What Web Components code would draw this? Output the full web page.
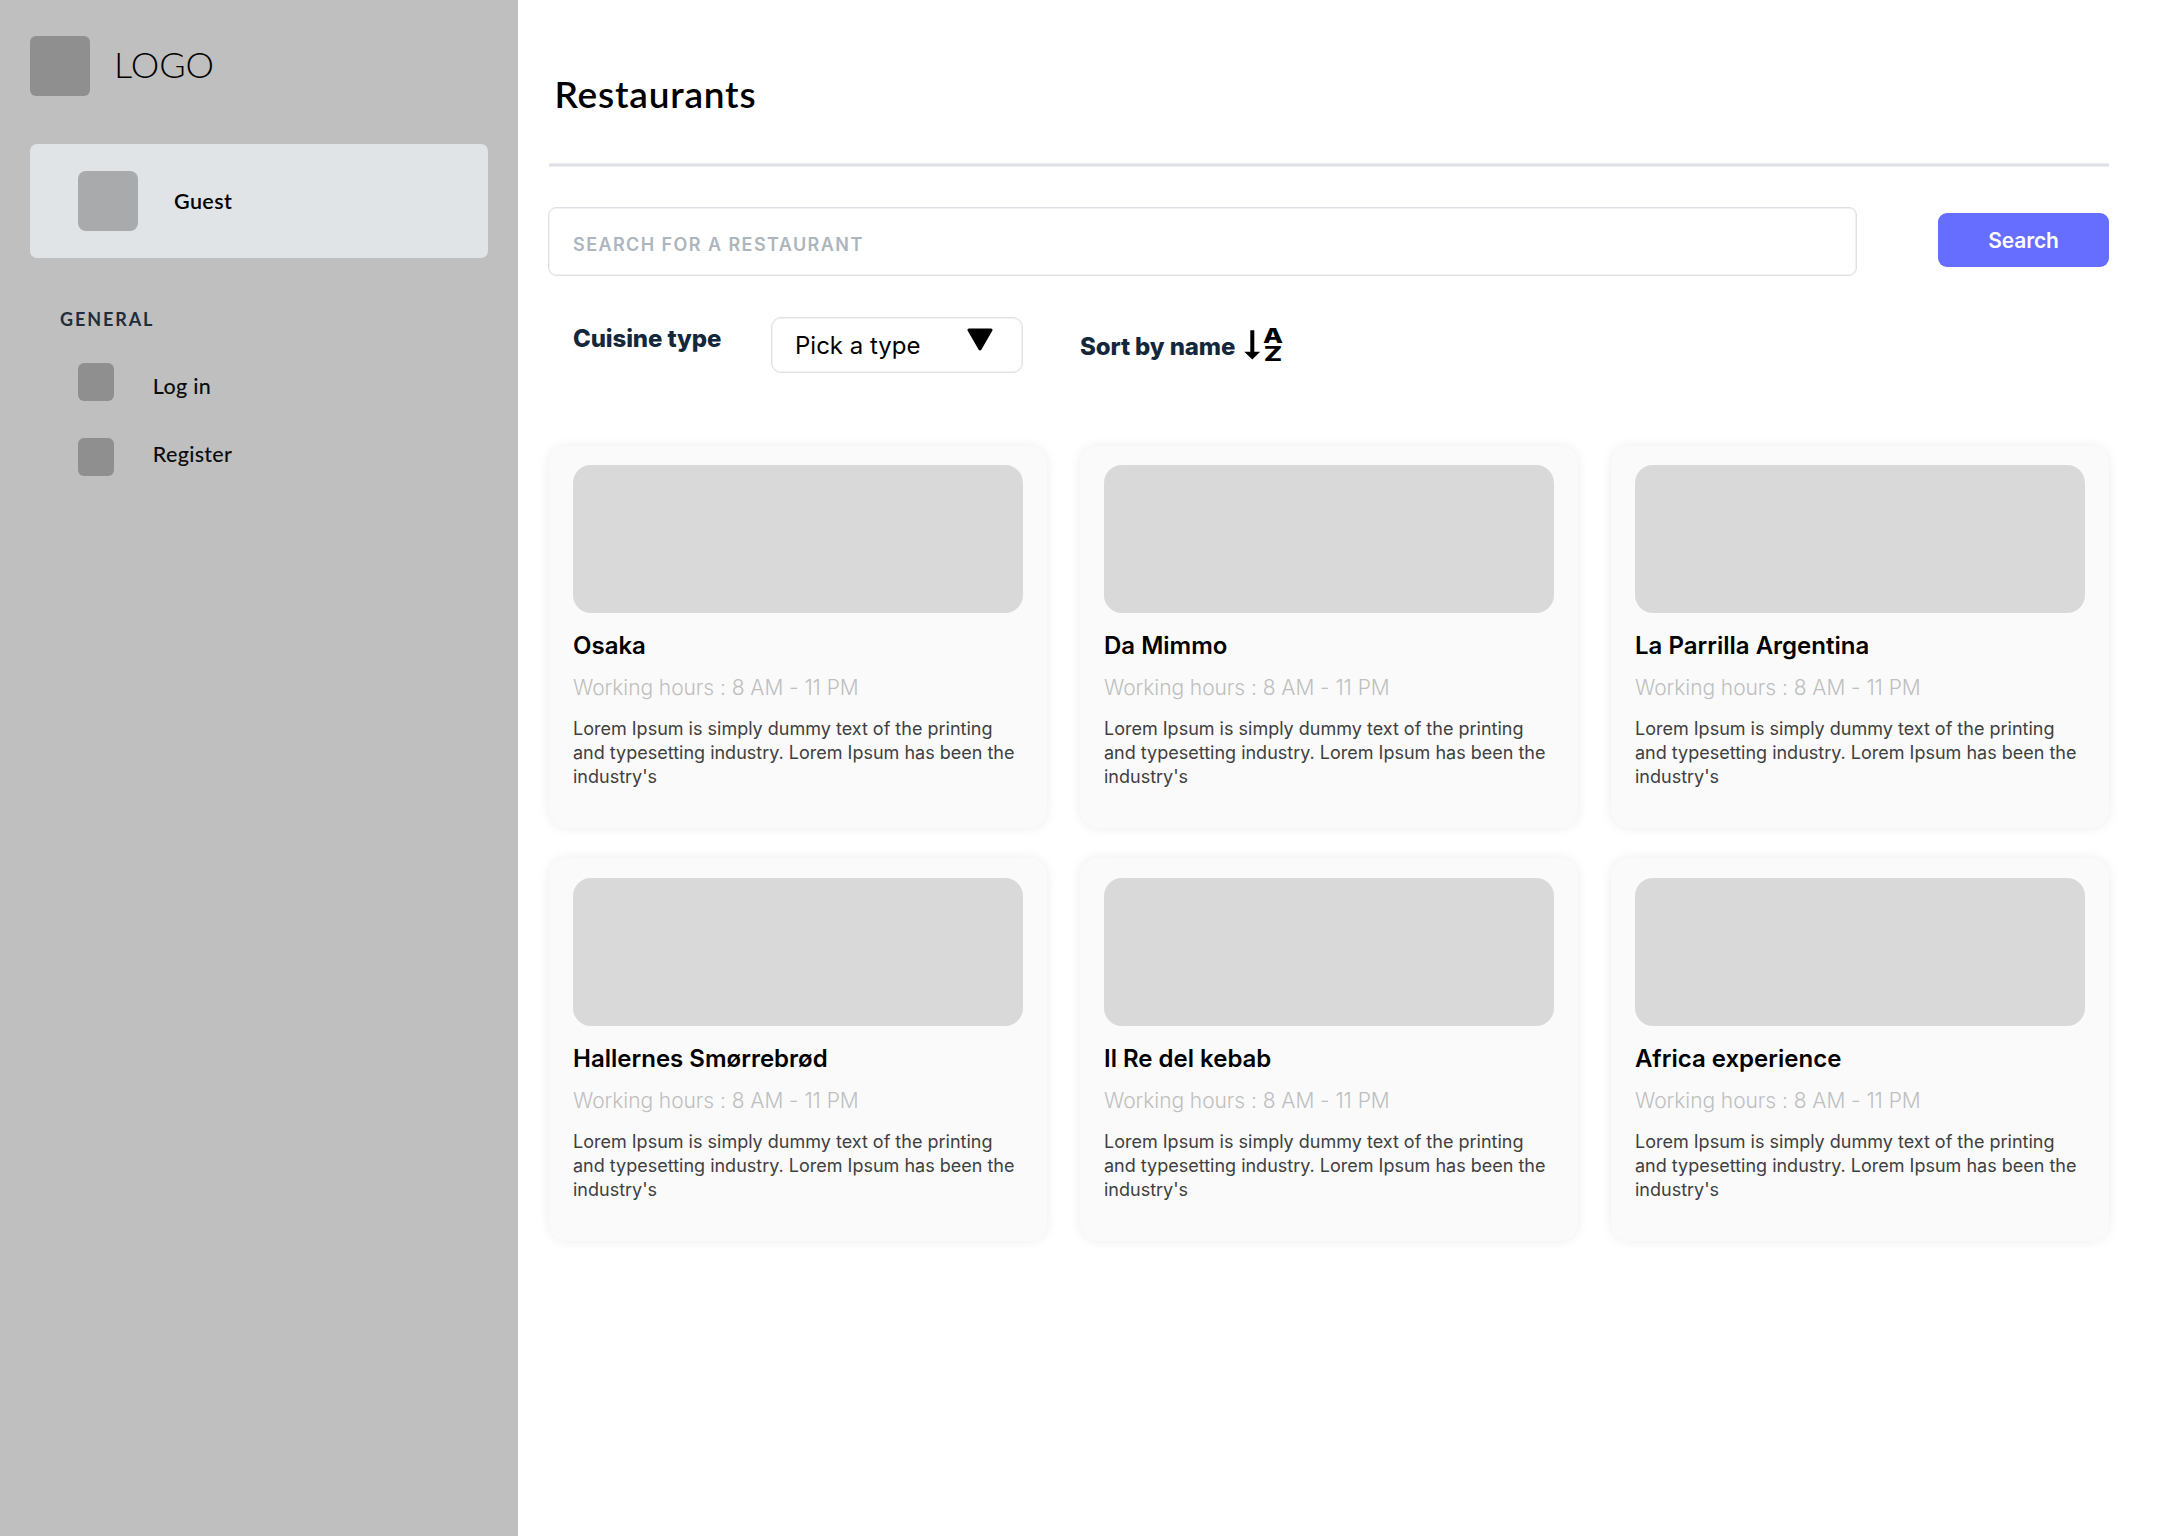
<!DOCTYPE html>
<html lang="en">
<head>
<meta charset="utf-8">
<title>Restaurants</title>
<style>
html,body{margin:0;height:100%;background:#fff}
body{font-family:Inter,"Liberation Sans",sans-serif;color:#000;overflow:hidden}
</style>
</head>
<body>
<app-shell>
  <side-bar slot="side">
    <user-card slot="user">Guest</user-card>
    <nav-item style="--shift:6.6px">Log in</nav-item>
    <nav-item style="--shift:-5.6px">Register</nav-item>
  </side-bar>
  <page-header>Restaurants</page-header>
  <search-bar></search-bar>
  <filter-bar></filter-bar>
  <card-grid>
    <restaurant-card name="Osaka"></restaurant-card>
    <restaurant-card name="Da Mimmo"></restaurant-card>
    <restaurant-card name="La Parrilla Argentina"></restaurant-card>
    <restaurant-card name="Hallernes Smørrebrød"></restaurant-card>
    <restaurant-card name="Il Re del kebab"></restaurant-card>
    <restaurant-card name="Africa experience"></restaurant-card>
  </card-grid>
</app-shell>
<script>
const define = (tag, html) => customElements.define(tag, class extends HTMLElement {
  constructor() {
    super();
    this.attachShadow({ mode: 'open' }).innerHTML = html;
  }
  connectedCallback() {
    const name = this.shadowRoot.querySelector('[data-name]');
    if (name) name.textContent = this.getAttribute('name');
  }
});

define('app-shell', `
<style>
:host{display:flex;height:1536px;width:2160px}
main{flex:1;min-width:0;box-sizing:border-box;padding:71.5px 51px 0 31.5px;display:flex;flex-direction:column}
</style>
<slot name="side"></slot><main><slot></slot></main>`);

define('side-bar', `
<style>
:host{display:flex;flex-direction:column;box-sizing:border-box;width:517.5px;padding:36px 29.5px 0 30px;background:#bfbfbf}
.brand{display:flex;align-items:center;height:60px;gap:24px}
.mark{width:60px;height:60px;border-radius:6px;background:#8f8f8f}
.name{font:300 36px/44px Lato,sans-serif;margin-top:-4px}
.user{margin-top:48px}
h2{margin:48.8px 0 0 30px;font:700 18px/24px Lato,sans-serif;letter-spacing:1.9px;color:#212e3a}
nav{display:flex;flex-direction:column;gap:36.5px;margin:32.2px 0 0 48px}
</style>
<div class="brand"><div class="mark"></div><div class="name">LOGO</div></div>
<div class="user"><slot name="user"></slot></div>
<h2>GENERAL</h2>
<nav><slot></slot></nav>`);

define('user-card', `
<style>
:host{display:flex;align-items:center;gap:36px;height:114px;box-sizing:border-box;padding-left:48px;border-radius:7px;background:#e1e4e7}
.avatar{width:60px;height:60px;border-radius:8px;background:#a9aaac}
.name{font:600 21.5px/26px Lato,sans-serif;letter-spacing:.4px;margin-top:-1px}
</style>
<div class="avatar"></div><div class="name"><slot></slot></div>`);

define('nav-item', `
<style>
:host{display:flex;align-items:center;gap:38.8px;height:38.5px}
.icon{width:36px;height:38.5px;border-radius:6px;background:#8f8f8f}
.label{font:500 21.5px/26px Lato,sans-serif;letter-spacing:.3px;margin-top:var(--shift);color:#0c0c0c}
</style>
<div class="icon"></div><div class="label"><slot></slot></div>`);

define('page-header', `
<style>
:host{display:flex;flex-direction:column;justify-content:space-between;height:95.5px}
h1{margin:0 0 0 5.5px;font:600 37px/44px Lato,sans-serif;letter-spacing:.8px}
.rule{height:4px;background:linear-gradient(#ebeef0 1px,#dee2e6 1px 3px,#ebeef0 3px)}
</style>
<h1><slot></slot></h1><div class="rule"></div>`);

define('search-bar', `
<style>
:host{display:flex;justify-content:space-between;align-items:flex-start;margin:40px 0 0 -1px}
.field{box-sizing:border-box;width:1309px;height:69px;border:1px solid #dee2e6;box-shadow:inset 0 0 0 1px #f0f2f4;border-radius:8px;padding:6.5px 0 0 24px;display:flex;align-items:center;font-size:18px;line-height:24px;font-weight:600;letter-spacing:1.42px;color:#adb5bd}
button{width:171px;height:54px;margin-top:6px;border:0;border-radius:9px;background:#666eff;color:#fff;font:600 21px/26px Inter,sans-serif;letter-spacing:-.15px;padding:1px 0 0}
</style>
<div class="field">SEARCH FOR A RESTAURANT</div><button>Search</button>`);

define('filter-bar', `
<style>
:host{display:flex;align-items:flex-start;margin-top:40.5px;height:56.5px;padding-left:24px;font-size:24px;line-height:30px;white-space:nowrap}
b{font-weight:800;letter-spacing:-.12px;color:#15273a}
.type{width:198px;margin-top:7px}
.select{box-sizing:border-box;width:252px;height:56.5px;border:1px solid #dee2e6;box-shadow:inset 0 0 0 1px #f0f2f4;border-radius:10px;display:flex;justify-content:space-between;padding:13.4px 29.5px 0 23px}
.select svg{margin-top:-3.4px}
.sort{width:157px;margin:15.8px 0 0 57px}
.icon{overflow:visible;margin:9.5px 0 0 6px}
</style>
<b class="type">Cuisine type</b>
<div class="select"><span>Pick a type</span><svg width="26" height="24" viewBox="0 0 26 24"><path d="M2 2H24L13 21Z" stroke="#000" stroke-width="3" stroke-linejoin="round"/></svg></div>
<b class="sort">Sort by name</b>
<svg class="icon" width="42" height="38" viewBox="0 0 42 38">
<path d="M7.3 4.3H11.3V25.8H17.2L9.3 33.5 1.3 25.8H7.3Z"/>
<g font-family="Inter" font-weight="800" font-size="20" letter-spacing="0"><text transform="translate(19.9 17) scale(1.3 1)">A</text><text transform="translate(20.7 35.3) scale(1.36 1)">Z</text></g></svg>`);

define('card-grid', `
<style>
:host{display:grid;grid-template-columns:repeat(3,498px);gap:30px 33px;margin-top:72.5px}
</style>
<slot></slot>`);

define('restaurant-card', `
<style>
:host{display:block;box-sizing:border-box;height:382.5px;padding:19.5px 24px 0;border-radius:18px;background:#fafafa;box-shadow:0 0 12px rgba(0,0,0,.08)}
.photo{height:148.2px;border-radius:18px;background:#d9d9d9}
h3{margin:18px 0 0;font-size:24px;line-height:30px;font-weight:600}
.hours{margin-top:14px;font-size:21px;line-height:26px;font-weight:300;letter-spacing:-.06px;color:#bfbfbf}
p{margin:16.2px 0 0;font-size:18px;line-height:24px;color:#404040}
</style>
<div class="photo"></div>
<h3 data-name></h3>
<div class="hours">Working hours : 8 AM - 11 PM</div>
<p>Lorem Ipsum is simply dummy text of the printing and typesetting industry. Lorem Ipsum has been the industry's</p>`);
</script>
</body>
</html>
